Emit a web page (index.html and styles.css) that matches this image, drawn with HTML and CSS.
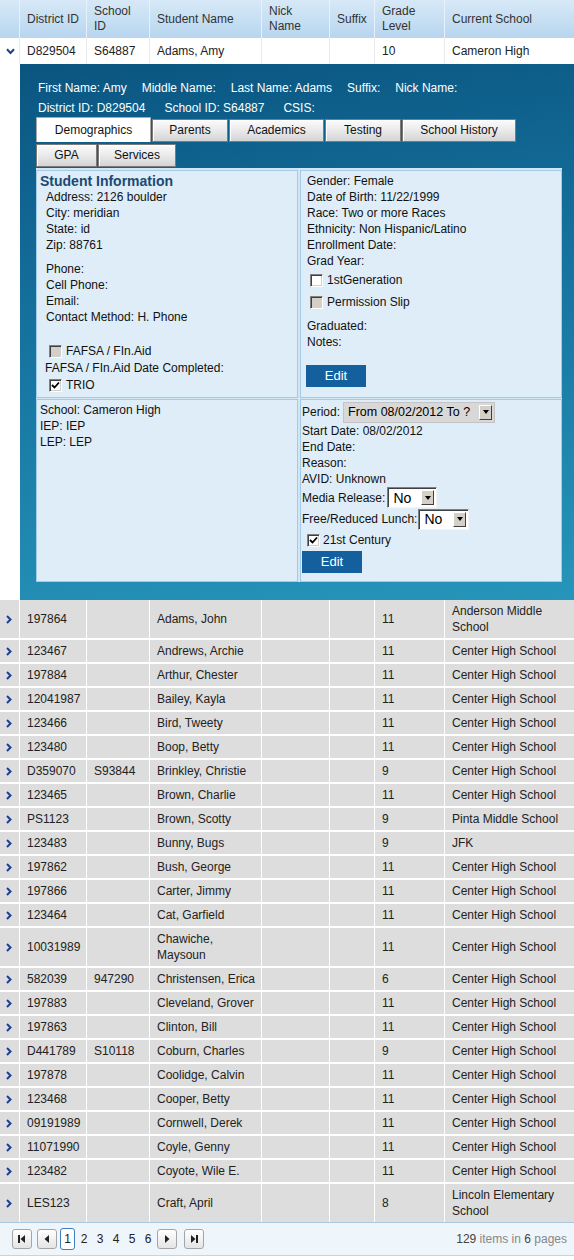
FILE: index.html
```html
<!DOCTYPE html>
<html>
<head>
<meta charset="utf-8">
<link rel="stylesheet" href="styles.css">
</head>
<body>
<table class="grid">
  <colgroup>
    <col class="c-exp"><col class="c-did"><col class="c-sid"><col class="c-name"><col class="c-nick"><col class="c-suf"><col class="c-grade"><col class="c-school">
  </colgroup>
  <thead>
    <tr>
      <th></th>
      <th>District ID</th>
      <th>School<br>ID</th>
      <th>Student Name</th>
      <th>Nick<br>Name</th>
      <th>Suffix</th>
      <th>Grade<br>Level</th>
      <th>Current School</th>
    </tr>
  </thead>
  <tbody>
    <tr class="open">
      <td class="exp"><svg class="down" width="9" height="7" viewBox="0 0 9 7"><path d="M1 1.2 L4.5 5 L8 1.2" fill="none" stroke="#1f3f8e" stroke-width="2"/></svg></td>
      <td>D829504</td><td>S64887</td><td>Adams, Amy</td><td></td><td></td><td>10</td><td>Cameron High</td>
    </tr>
    <tr class="detail-row">
      <td class="blank"></td>
      <td colspan="7" class="detail">
        <div class="info">
          <div class="info-line"><span>First Name: Amy</span><span>Middle Name:</span><span>Last Name: Adams</span><span>Suffix:</span><span>Nick Name:</span></div>
          <div class="info-line l2"><span>District ID: D829504</span><span>School ID: S64887</span><span>CSIS:</span></div>
        </div>
        <div class="tabs">
          <span class="tab on t-demo">Demographics</span>
          <span class="tab t-par">Parents</span>
          <span class="tab t-aca">Academics</span>
          <span class="tab t-test">Testing</span>
          <span class="tab t-hist">School History</span>
        </div>
        <div class="tabs tabs2">
          <span class="tab t-gpa">GPA</span>
          <span class="tab t-serv">Services</span>
        </div>
        <div class="tabbody">
          <div class="panel p-info">
            <div class="ptitle">Student Information</div>
            <div class="addr">
              <div>Address: 2126 boulder</div>
              <div>City: meridian</div>
              <div>State: id</div>
              <div>Zip: 88761</div>
            </div>
            <div class="contact">
              <div>Phone:</div>
              <div>Cell Phone:</div>
              <div>Email:</div>
              <div>Contact Method: H. Phone</div>
            </div>
            <div class="cbrow fafsa"><span class="cb dis"></span><span>FAFSA / FIn.Aid</span></div>
            <div class="fafsa-date">FAFSA / FIn.Aid Date Completed:</div>
            <div class="cbrow trio"><span class="cb"><svg width="9" height="9" viewBox="0 0 9 9"><path d="M1 4 L3.5 6.5 L8 1.5" fill="none" stroke="#000" stroke-width="1.8"/></svg></span><span>TRIO</span></div>
          </div>
          <div class="panel p-demo">
            <div>Gender: Female</div>
            <div>Date of Birth: 11/22/1999</div>
            <div>Race: Two or more Races</div>
            <div>Ethnicity: Non Hispanic/Latino</div>
            <div>Enrollment Date:</div>
            <div>Grad Year:</div>
            <div class="cbrow2"><span class="cb"></span><span>1stGeneration</span></div>
            <div class="cbrow2"><span class="cb dis"></span><span>Permission Slip</span></div>
            <div class="grad">Graduated:</div>
            <div>Notes:</div>
            <div class="edit e1">Edit</div>
          </div>
          <div class="panel p-school">
            <div>School: Cameron High</div>
            <div>IEP: IEP</div>
            <div>LEP: LEP</div>
          </div>
          <div class="panel p-period">
            <div class="frow r-period">Period: <span class="sel flat s-period"><span class="stxt">From 08/02/2012 To ?</span><span class="sbtn"><i></i></span></span></div>
            <div>Start Date: 08/02/2012</div>
            <div>End Date:</div>
            <div>Reason:</div>
            <div>AVID: Unknown</div>
            <div class="frow r-media">Media Release: <span class="sel s-media"><span class="stxt">No</span><span class="sbtn"><i></i></span></span></div>
            <div class="frow r-lunch">Free/Reduced Lunch:<span class="sel s-lunch"><span class="stxt">No</span><span class="sbtn"><i></i></span></span></div>
            <div class="cbrow3"><span class="cb"><svg width="9" height="9" viewBox="0 0 9 9"><path d="M1 4 L3.5 6.5 L8 1.5" fill="none" stroke="#000" stroke-width="1.8"/></svg></span><span>21st Century</span></div>
            <div class="edit e2">Edit</div>
          </div>
        </div>
      </td>
    </tr>
    <tr><td class="exp"><svg class="right" width="6" height="9" viewBox="0 0 6 9"><path d="M1 1 L4.5 4.5 L1 8" fill="none" stroke="#1f3f8e" stroke-width="2"/></svg></td><td>197864</td><td></td><td>Adams, John</td><td></td><td></td><td>11</td><td>Anderson Middle<br>School</td></tr>
    <tr><td class="exp"><svg class="right" width="6" height="9" viewBox="0 0 6 9"><path d="M1 1 L4.5 4.5 L1 8" fill="none" stroke="#1f3f8e" stroke-width="2"/></svg></td><td>123467</td><td></td><td>Andrews, Archie</td><td></td><td></td><td>11</td><td>Center High School</td></tr>
    <tr><td class="exp"><svg class="right" width="6" height="9" viewBox="0 0 6 9"><path d="M1 1 L4.5 4.5 L1 8" fill="none" stroke="#1f3f8e" stroke-width="2"/></svg></td><td>197884</td><td></td><td>Arthur, Chester</td><td></td><td></td><td>11</td><td>Center High School</td></tr>
    <tr><td class="exp"><svg class="right" width="6" height="9" viewBox="0 0 6 9"><path d="M1 1 L4.5 4.5 L1 8" fill="none" stroke="#1f3f8e" stroke-width="2"/></svg></td><td>12041987</td><td></td><td>Bailey, Kayla</td><td></td><td></td><td>11</td><td>Center High School</td></tr>
    <tr><td class="exp"><svg class="right" width="6" height="9" viewBox="0 0 6 9"><path d="M1 1 L4.5 4.5 L1 8" fill="none" stroke="#1f3f8e" stroke-width="2"/></svg></td><td>123466</td><td></td><td>Bird, Tweety</td><td></td><td></td><td>11</td><td>Center High School</td></tr>
    <tr><td class="exp"><svg class="right" width="6" height="9" viewBox="0 0 6 9"><path d="M1 1 L4.5 4.5 L1 8" fill="none" stroke="#1f3f8e" stroke-width="2"/></svg></td><td>123480</td><td></td><td>Boop, Betty</td><td></td><td></td><td>11</td><td>Center High School</td></tr>
    <tr><td class="exp"><svg class="right" width="6" height="9" viewBox="0 0 6 9"><path d="M1 1 L4.5 4.5 L1 8" fill="none" stroke="#1f3f8e" stroke-width="2"/></svg></td><td>D359070</td><td>S93844</td><td>Brinkley, Christie</td><td></td><td></td><td>9</td><td>Center High School</td></tr>
    <tr><td class="exp"><svg class="right" width="6" height="9" viewBox="0 0 6 9"><path d="M1 1 L4.5 4.5 L1 8" fill="none" stroke="#1f3f8e" stroke-width="2"/></svg></td><td>123465</td><td></td><td>Brown, Charlie</td><td></td><td></td><td>11</td><td>Center High School</td></tr>
    <tr><td class="exp"><svg class="right" width="6" height="9" viewBox="0 0 6 9"><path d="M1 1 L4.5 4.5 L1 8" fill="none" stroke="#1f3f8e" stroke-width="2"/></svg></td><td>PS1123</td><td></td><td>Brown, Scotty</td><td></td><td></td><td>9</td><td>Pinta Middle School</td></tr>
    <tr><td class="exp"><svg class="right" width="6" height="9" viewBox="0 0 6 9"><path d="M1 1 L4.5 4.5 L1 8" fill="none" stroke="#1f3f8e" stroke-width="2"/></svg></td><td>123483</td><td></td><td>Bunny, Bugs</td><td></td><td></td><td>9</td><td>JFK</td></tr>
    <tr><td class="exp"><svg class="right" width="6" height="9" viewBox="0 0 6 9"><path d="M1 1 L4.5 4.5 L1 8" fill="none" stroke="#1f3f8e" stroke-width="2"/></svg></td><td>197862</td><td></td><td>Bush, George</td><td></td><td></td><td>11</td><td>Center High School</td></tr>
    <tr><td class="exp"><svg class="right" width="6" height="9" viewBox="0 0 6 9"><path d="M1 1 L4.5 4.5 L1 8" fill="none" stroke="#1f3f8e" stroke-width="2"/></svg></td><td>197866</td><td></td><td>Carter, Jimmy</td><td></td><td></td><td>11</td><td>Center High School</td></tr>
    <tr><td class="exp"><svg class="right" width="6" height="9" viewBox="0 0 6 9"><path d="M1 1 L4.5 4.5 L1 8" fill="none" stroke="#1f3f8e" stroke-width="2"/></svg></td><td>123464</td><td></td><td>Cat, Garfield</td><td></td><td></td><td>11</td><td>Center High School</td></tr>
    <tr><td class="exp"><svg class="right" width="6" height="9" viewBox="0 0 6 9"><path d="M1 1 L4.5 4.5 L1 8" fill="none" stroke="#1f3f8e" stroke-width="2"/></svg></td><td>10031989</td><td></td><td>Chawiche,<br>Maysoun</td><td></td><td></td><td>11</td><td>Center High School</td></tr>
    <tr><td class="exp"><svg class="right" width="6" height="9" viewBox="0 0 6 9"><path d="M1 1 L4.5 4.5 L1 8" fill="none" stroke="#1f3f8e" stroke-width="2"/></svg></td><td>582039</td><td>947290</td><td>Christensen, Erica</td><td></td><td></td><td>6</td><td>Center High School</td></tr>
    <tr><td class="exp"><svg class="right" width="6" height="9" viewBox="0 0 6 9"><path d="M1 1 L4.5 4.5 L1 8" fill="none" stroke="#1f3f8e" stroke-width="2"/></svg></td><td>197883</td><td></td><td>Cleveland, Grover</td><td></td><td></td><td>11</td><td>Center High School</td></tr>
    <tr><td class="exp"><svg class="right" width="6" height="9" viewBox="0 0 6 9"><path d="M1 1 L4.5 4.5 L1 8" fill="none" stroke="#1f3f8e" stroke-width="2"/></svg></td><td>197863</td><td></td><td>Clinton, Bill</td><td></td><td></td><td>11</td><td>Center High School</td></tr>
    <tr><td class="exp"><svg class="right" width="6" height="9" viewBox="0 0 6 9"><path d="M1 1 L4.5 4.5 L1 8" fill="none" stroke="#1f3f8e" stroke-width="2"/></svg></td><td>D441789</td><td>S10118</td><td>Coburn, Charles</td><td></td><td></td><td>9</td><td>Center High School</td></tr>
    <tr><td class="exp"><svg class="right" width="6" height="9" viewBox="0 0 6 9"><path d="M1 1 L4.5 4.5 L1 8" fill="none" stroke="#1f3f8e" stroke-width="2"/></svg></td><td>197878</td><td></td><td>Coolidge, Calvin</td><td></td><td></td><td>11</td><td>Center High School</td></tr>
    <tr><td class="exp"><svg class="right" width="6" height="9" viewBox="0 0 6 9"><path d="M1 1 L4.5 4.5 L1 8" fill="none" stroke="#1f3f8e" stroke-width="2"/></svg></td><td>123468</td><td></td><td>Cooper, Betty</td><td></td><td></td><td>11</td><td>Center High School</td></tr>
    <tr><td class="exp"><svg class="right" width="6" height="9" viewBox="0 0 6 9"><path d="M1 1 L4.5 4.5 L1 8" fill="none" stroke="#1f3f8e" stroke-width="2"/></svg></td><td>09191989</td><td></td><td>Cornwell, Derek</td><td></td><td></td><td>11</td><td>Center High School</td></tr>
    <tr><td class="exp"><svg class="right" width="6" height="9" viewBox="0 0 6 9"><path d="M1 1 L4.5 4.5 L1 8" fill="none" stroke="#1f3f8e" stroke-width="2"/></svg></td><td>11071990</td><td></td><td>Coyle, Genny</td><td></td><td></td><td>11</td><td>Center High School</td></tr>
    <tr><td class="exp"><svg class="right" width="6" height="9" viewBox="0 0 6 9"><path d="M1 1 L4.5 4.5 L1 8" fill="none" stroke="#1f3f8e" stroke-width="2"/></svg></td><td>123482</td><td></td><td>Coyote, Wile E.</td><td></td><td></td><td>11</td><td>Center High School</td></tr>
    <tr><td class="exp"><svg class="right" width="6" height="9" viewBox="0 0 6 9"><path d="M1 1 L4.5 4.5 L1 8" fill="none" stroke="#1f3f8e" stroke-width="2"/></svg></td><td>LES123</td><td></td><td>Craft, April</td><td></td><td></td><td>8</td><td>Lincoln Elementary<br>School</td></tr>
  </tbody>
</table>
<div class="pager">
  <div class="pnav">
    <span class="pbtn first"><svg width="10" height="10" viewBox="0 0 10 10"><rect x="1" y="1" width="2" height="8" fill="#222"/><path d="M8 1 L3.5 5 L8 9 Z" fill="#222"/></svg></span>
    <span class="pbtn prev"><svg width="10" height="10" viewBox="0 0 10 10"><path d="M7 1 L2.5 5 L7 9 Z" fill="#222"/></svg></span>
    <span class="pages"><span class="pg cur">1</span><span class="pg">2</span><span class="pg">3</span><span class="pg">4</span><span class="pg">5</span><span class="pg">6</span></span>
    <span class="pbtn next"><svg width="10" height="10" viewBox="0 0 10 10"><path d="M3 1 L7.5 5 L3 9 Z" fill="#222"/></svg></span>
    <span class="pbtn last"><svg width="10" height="10" viewBox="0 0 10 10"><path d="M2 1 L6.5 5 L2 9 Z" fill="#222"/><rect x="7" y="1" width="2" height="8" fill="#222"/></svg></span>
  </div>
  <div class="pinfo"><b>129</b> items in <b>6</b> pages</div>
</div>
</body>
</html>
```
FILE: styles.css
```css
html, body {
  margin: 0;
  padding: 0;
  background: #fff;
}
body {
  width: 574px;
  font-family: "Liberation Sans", Arial, sans-serif;
  font-size: 12px;
  color: #222;
}

/* ---------- grid ---------- */
.grid {
  width: 574px;
  border-collapse: separate;
  border-spacing: 0;
  table-layout: fixed;
}
.c-exp { width: 20px; }
.c-did { width: 67px; }
.c-sid { width: 63px; }
.c-name { width: 112px; }
.c-nick { width: 68px; }
.c-suf { width: 45px; }
.c-grade { width: 70px; }
.c-school { width: 129px; }

.grid th {
  background: linear-gradient(#d7e9f7, #b7d6ef);
  font-weight: normal;
  text-align: left;
  color: #333;
  padding: 4px 7px 4px 7px;
  line-height: 15px;
  height: 30px;
  white-space: nowrap;
  border-right: 1px solid #e6f1fa;
  vertical-align: middle;
}
.grid th:last-child { border-right: 0; }

.grid td {
  background: #dddddd;
  padding: 3px 7px 3px 7px;
  line-height: 16px;
  border-right: 1px solid #fff;
  border-bottom: 2px solid #fff;
  vertical-align: middle;
  white-space: nowrap;
  overflow: hidden;
}
.grid td:last-child { border-right: 0; }
.grid td.exp {
  padding: 0 0 0 6px;
}
.exp svg { display: block; }

.grid tr.open td {
  background: #fff;
  padding-top: 5px;
  padding-bottom: 5px;
  border-bottom: 0;
  border-right-color: #ebebeb;
}
.grid tr.open td.exp { padding-top: 0; padding-bottom: 0; }

.grid tr.detail-row td {
  border: 0;
  padding: 0;
  vertical-align: top;
}
.grid tr.detail-row td.blank { background: #fff; }
.grid tr.detail-row td.detail {
  background: linear-gradient(172deg, #0a5580 0%, #16739f 45%, #2795ba 100%);
  padding: 14px 12px 18px 16px;
  white-space: normal;
}

/* ---------- detail header ---------- */
.info {
  padding-left: 2px;
  color: #fff;
  line-height: 20px;
}
.info-line {
  display: flex;
  gap: 15px;
}
.info-line.l2 { gap: 19px; }

.tabs {
  display: flex;
  align-items: flex-end;
  gap: 1px;
  height: 25px;
  margin-top: -1px;
}
.tabs2 {
  height: 23px;
  margin-top: 2px;
}
.tab {
  box-sizing: border-box;
  height: 23px;
  border: 1px solid #7b7b7b;
  background: linear-gradient(#fbfbfb, #ececec 45%, #d4d4d4);
  box-shadow: inset 1px 1px 0 #fff;
  text-align: center;
  line-height: 21px;
  color: #111;
}
.tab.on {
  height: 25px;
  line-height: 24px;
  background: #fff;
  border-color: #a9a9a9;
  border-bottom: 0;
  box-shadow: none;
}
.t-demo { width: 115px; }
.t-par { width: 76px; }
.t-aca { width: 95px; }
.t-test { width: 76px; }
.t-hist { width: 114px; }
.t-gpa { width: 61px; }
.t-serv { width: 78px; }

.tabbody {
  margin-top: 1px;
  display: grid;
  grid-template-columns: 262px 262px;
  grid-template-rows: 228px 183px;
  gap: 1px 2px;
  padding-top: 2px;
  background: #d2e6f3;
}
.panel {
  box-sizing: border-box;
  border: 1px solid #a3cae6;
  background: #deedf7;
  line-height: 16px;
  color: #111;
}

/* student info */
.p-info { padding: 2px 3px; }
.ptitle {
  font-size: 14px;
  font-weight: bold;
  color: #1a4a73;
}
.addr { margin-left: 6px; }
.contact { margin-left: 6px; margin-top: 8px; }
.cbrow {
  display: flex;
  align-items: center;
  gap: 4px;
  height: 16px;
  margin-left: 9px;
}
.fafsa { margin-top: 18px; }
.fafsa-date { margin-left: 5px; margin-top: 1px; }
.trio { margin-top: 1px; }

/* demographics */
.p-demo { padding: 2px 6px; display: flex; flex-direction: column; }
.cbrow2 {
  display: flex;
  align-items: center;
  gap: 4px;
  height: 22px;
  margin-left: 3px;
}
.grad { margin-top: 5px; }
.edit {
  width: 60px;
  height: 22px;
  background: #145f9d;
  color: #fff;
  font-size: 13px;
  line-height: 22px;
  text-align: center;
}
.e1 { margin-top: 15px; margin-left: -1px; }

.p-school { padding: 2px 3px; }

/* period */
.p-period { padding: 1px 1px; display: flex; flex-direction: column; }
.frow {
  display: flex;
  align-items: center;
  gap: 3px;
  white-space: nowrap;
}
.r-period { height: 22px; }
.r-media { height: 21px; gap: 2px; }
.r-lunch { height: 22px; gap: 1px; }
.cbrow3 {
  display: flex;
  align-items: center;
  gap: 3px;
  height: 20px;
  margin-left: 5px;
}
.e2 { margin-top: 1px; }

.sel {
  box-sizing: border-box;
  display: inline-flex;
  align-items: center;
  height: 21px;
  background: #fff;
  border: 1px solid;
  border-color: #808080 #f4f4f4 #f4f4f4 #808080;
  box-shadow: inset 1px 1px 0 #404040;
  font-size: 14px;
  color: #000;
  white-space: nowrap;
}
.sel.flat {
  background: #d8d8d8;
  border-color: #c4c4c4;
  box-shadow: none;
  font-size: 12.5px;
}
.stxt { padding-left: 5px; flex: 1; white-space: nowrap; overflow: visible; }
.sel.flat .stxt { padding-left: 4px; }
.sbtn {
  box-sizing: border-box;
  width: 13px;
  height: 15px;
  flex: none;
  margin-right: 2px;
  background: #d4d0c8;
  border: 1px solid;
  border-color: #fff #404040 #404040 #fff;
  display: flex;
  align-items: center;
  justify-content: center;
}
.sbtn i {
  width: 0;
  height: 0;
  border-left: 3.5px solid transparent;
  border-right: 3.5px solid transparent;
  border-top: 4px solid #000;
}
.s-period { width: 152px; }
.s-media { width: 50px; }
.s-lunch { width: 51px; }

/* checkbox */
.cb {
  box-sizing: border-box;
  display: inline-flex;
  align-items: center;
  justify-content: center;
  width: 13px;
  height: 13px;
  flex: none;
  background: #fff;
  border: 1px solid;
  border-color: #808080 #fff #fff #808080;
  box-shadow: inset 1px 1px 0 #404040, inset -1px -1px 0 #d4d0c8;
}
.cb.dis { background: #d4d0c8; }
.cb svg { display: block; }

/* ---------- pager ---------- */
.pager {
  box-sizing: border-box;
  height: 34px;
  margin-top: -2px;
  border-top: 1px solid #a8c7e0;
  border-bottom: 1px solid #bdd6ea;
  background: #eef5fb;
  display: flex;
  align-items: center;
  justify-content: space-between;
  padding: 0 7px 0 12px;
}
.pnav {
  display: flex;
  align-items: center;
}
.pbtn {
  box-sizing: border-box;
  width: 20px;
  height: 20px;
  border: 1px solid #a5a5a5;
  border-radius: 3px;
  background: linear-gradient(#ffffff, #e4e4e4);
  display: flex;
  align-items: center;
  justify-content: center;
}
.pbtn svg { display: block; }
.prev { margin-left: 5px; }
.pages { display: flex; margin-left: 3px; margin-right: 1px; }
.pg {
  box-sizing: border-box;
  width: 16px;
  height: 22px;
  line-height: 20px;
  text-align: center;
  color: #222;
  border: 1px solid transparent;
}
.pg.cur {
  width: 15px;
  margin-right: 1px;
  border-color: #3f7fbf;
  border-radius: 3px;
  background: #fff;
}
.last { margin-left: 7px; }
.pinfo { color: #888; }
.pinfo b { font-weight: normal; color: #444; }
```
